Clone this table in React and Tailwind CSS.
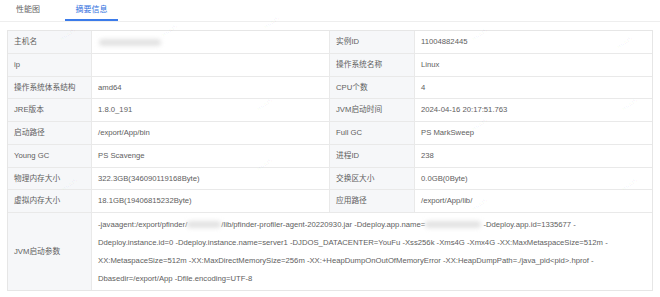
import React from "react";

const rows = [
  ["主机名", "__blur__", "实例ID", "11004882445"],
  ["ip", "", "操作系统名称", "Linux"],
  ["操作系统体系结构", "amd64", "CPU个数", "4"],
  ["JRE版本", "1.8.0_191", "JVM启动时间", "2024-04-16 20:17:51.763"],
  ["启动路径", "/export/App/bin", "Full GC", "PS MarkSweep"],
  ["Young GC", "PS Scavenge", "进程ID", "238"],
  ["物理内存大小", "322.3GB(346090119168Byte)", "交换区大小", "0.0GB(0Byte)"],
  ["虚拟内存大小", "18.1GB(19406815232Byte)", "应用路径", "/export/App/lib/"],
];

function Blur({ w }) {
  return (
    <span
      className="inline-block h-[7px] rounded-full bg-[#e3e3e3] blur-[2px] align-middle"
      style={{ width: w }}
    />
  );
}

const marks = [
  [58, 30], [160, 26], [262, 18], [470, 30], [615, 38], [255, 100],
  [470, 120], [620, 100], [60, 180], [255, 160], [470, 200], [620, 180],
];

export default function App() {
  return (
    <div
      className="relative h-[297px] w-[660px] overflow-hidden bg-white text-[7.7px] text-[#5e5e5e]"
      style={{ fontFamily: '"Liberation Sans", "Noto Sans CJK SC", sans-serif' }}
    >
      {/* TABS */}
      <div className="flex h-[22px] border-b border-[#eeeeee] pl-[16px] text-[8px]">
        <div className="flex h-full items-center pb-[2px] text-[#666]">性能图</div>
        <div className="relative ml-[25px] flex h-full w-[53px] items-center justify-center pb-[2px] text-[#2f6fde]">
          摘要信息
          <span className="absolute bottom-[0px] left-0 h-[2px] w-full bg-[#3b7bea]" />
        </div>
      </div>

      {/* TABLE */}
      <div className="ml-[7px] mt-[8px] w-[646px] border border-[#e6e6e6]">
        {rows.map((r, i) => (
          <div
            key={i}
            className="grid h-[22.75px] grid-cols-[84px_238px_85px_1fr] border-b border-[#e9e9e9]"
          >
            <div className="flex items-center border-r border-[#e9e9e9] bg-[#f6f7f9] pl-[6px]">{r[0]}</div>
            <div className="flex items-center border-r border-[#e9e9e9] pl-[6px]">
              {r[1] === "__blur__" ? <span className="ml-[1px]"><Blur w={62} /></span> : r[1]}
            </div>
            <div className="flex items-center border-r border-[#e9e9e9] bg-[#f6f7f9] pl-[6px]">{r[2]}</div>
            <div className="flex items-center pl-[6px]">{r[3]}</div>
          </div>
        ))}
        <div className="grid h-[77px] grid-cols-[84px_1fr]">
          <div className="flex items-center border-r border-[#e9e9e9] bg-[#f6f7f9] pl-[6px]">JVM启动参数</div>
          <div className="flex flex-col justify-center whitespace-nowrap pl-[6px] leading-[18px]">
            <div>
              -javaagent:/export/pfinder/<Blur w={34} />/lib/pfinder-profiler-agent-20220930.jar -Ddeploy.app.name=<Blur w={56} /> -Ddeploy.app.id=1335677 -
            </div>
            <div>
              Ddeploy.instance.id=0 -Ddeploy.instance.name=server1 -DJDOS_DATACENTER=YouFu -Xss256k -Xms4G -Xmx4G -XX:MaxMetaspaceSize=512m -
            </div>
            <div>
              XX:MetaspaceSize=512m -XX:MaxDirectMemorySize=256m -XX:+HeapDumpOnOutOfMemoryError -XX:HeapDumpPath=./java_pid&lt;pid&gt;.hprof -
            </div>
            <div>Dbasedir=/export/App -Dfile.encoding=UTF-8</div>
          </div>
        </div>
      </div>

      {/* watermark */}
      {marks.map(([x, y], i) => (
        <span
          key={i}
          className="pointer-events-none absolute -rotate-[35deg] text-[7px] text-black/[0.05]"
          style={{ left: x, top: y }}
        >
          linqu5
        </span>
      ))}
    </div>
  );
}
